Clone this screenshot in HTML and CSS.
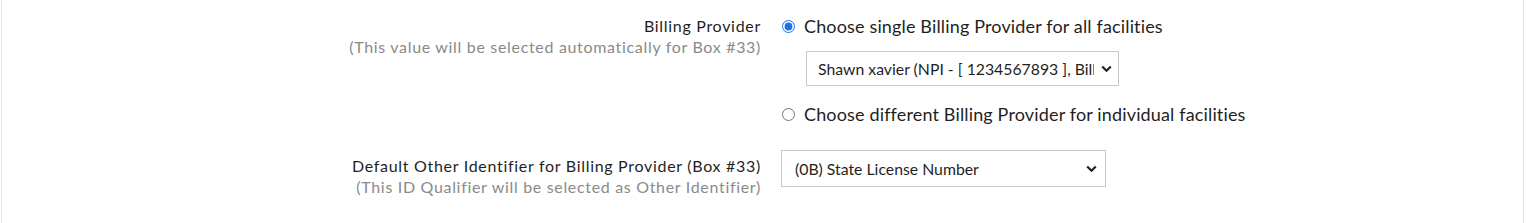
FILE: index.html
```html
<!DOCTYPE html>
<html lang="en">
<head>
    <meta charset="UTF-8">
    <meta name="viewport" content="width=device-width, initial-scale=1.0">
    <title>Billing Provider</title>
    <link rel="stylesheet" href="styles.css">
</head>
<body>
    <div class="panel">
        <div class="row row1">
            <div class="label">
                <div class="title">Billing Provider</div>
                <div class="hint">(This value will be selected automatically for Box #33)</div>
            </div>
            <div class="value">
                <label class="opt">
                    <input type="radio" name="bp" checked>
                    <span>Choose single Billing Provider for all facilities</span>
                </label>
                <select class="sel sel1">
                    <option>Shawn xavier (NPI - [ 1234567893 ], Billing Provider)</option>
                </select>
                <label class="opt opt2">
                    <input type="radio" name="bp">
                    <span>Choose different Billing Provider for individual facilities</span>
                </label>
            </div>
        </div>
        <div class="row row2">
            <div class="label">
                <div class="title">Default Other Identifier for Billing Provider (Box #33)</div>
                <div class="hint">(This ID Qualifier will be selected as Other Identifier)</div>
            </div>
            <div class="value">
                <select class="sel sel2">
                    <option>(0B) State License Number</option>
                </select>
            </div>
        </div>
    </div>
</body>
</html>
```

FILE: styles.css
```css
*{
    margin: 0;
    padding: 0;
    box-sizing: border-box;
}
body{
    font-family: Lato, "Open Sans", sans-serif;
    color: #1f1f1f;
    background: #fff;
}
.panel{
    margin-left: 1px;
    width: 1523px;
    height: 223px;
    border-left: 1px solid #e2e2e2;
    border-right: 1px solid #e2e2e2;
    padding-top: 16px;
}
.row{
    display: flex;
    align-items: flex-start;
    gap: 20px;
}
.label{
    width: 759px;
    text-align: right;
    white-space: nowrap;
}
.title{
    font-size: 16px;
    line-height: 20px;
    letter-spacing: 0.7px;
}
.hint{
    font-size: 16px;
    line-height: 21px;
    color: #8a8a8a;
    letter-spacing: 0.68px;
}
.value{
    display: flex;
    flex-direction: column;
    align-items: flex-start;
}
.opt{
    display: flex;
    align-items: center;
    font-size: 18px;
    line-height: 20px;
    letter-spacing: 0.15px;
    white-space: nowrap;
}
.opt input{
    width: 13px;
    height: 13px;
    margin: 0 9px 0 1px;
    accent-color: #1a73e8;
}
.opt2{
    margin-top: 18px;
}
.sel{
    appearance: none;
    -webkit-appearance: none;
    font-family: Lato, "Open Sans", sans-serif;
    font-size: 15.8px;
    color: #1f1f1f;
    background: #fff url("data:image/svg+xml;utf8,<svg xmlns='http://www.w3.org/2000/svg' width='11' height='8' viewBox='0 0 11 8'><path d='M1.2 1.5 L5.5 5.8 L9.8 1.5' fill='none' stroke='%23222' stroke-width='2.2'/></svg>") no-repeat right 6px center;
    border: 1px solid #c8c8c8;
    border-radius: 0;
    outline: none;
}
.sel1{
    margin: 15px 0 0 25px;
    width: 313px;
    height: 35px;
    padding: 0 24px 0 11px;
}
.row2{
    margin-top: 26px;
}
.row2 .label{
    padding-top: 6px;
}
.sel2{
    width: 325px;
    height: 37px;
    padding: 0 28px 0 13px;
    background-position: right 8px center;
}
```
